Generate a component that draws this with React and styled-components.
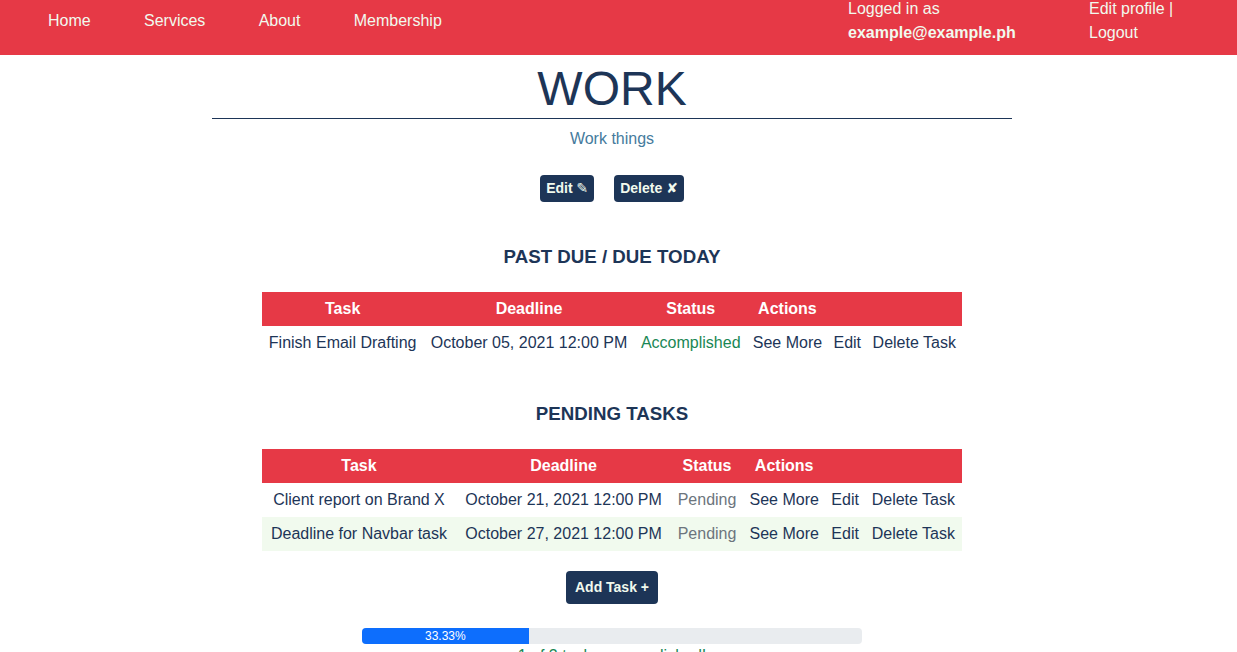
import React from 'react';
import styled, { createGlobalStyle } from 'styled-components';

const red = '#e63946';
const navy = '#1d3557';
const cream = '#f1faee';
const steel = '#457b9d';

const GlobalStyle = createGlobalStyle`
body {
  margin: 0;
  font-family: "Liberation Sans", Arial, "DejaVu Sans", sans-serif;
  font-size: 16px;
  line-height: 24px;
  color: ${navy};
  background: white;
}
`;

const Navbar = styled.nav`
display: flex;
height: 55px;
background-color: ${red};
color: ${cream};
`;

const NavLinks = styled.div`
display: flex;
gap: 53.3px;
padding: 9px 0 0 48px;
`;

const NavLink = styled.a`
color: ${cream};
text-decoration: none;
height: 24px;
`;

const NavBlock = styled.div`
display: flex;
flex-direction: column;
margin-top: -3px;
width: ${({ $width }) => $width}px;
margin-left: ${({ $auto }) => ($auto ? 'auto' : '0')};
`;

const Strong = styled.span`
font-weight: bold;
`;

const Main = styled.main`
width: 1224px;
display: flex;
flex-direction: column;
align-items: center;
`;

const Title = styled.h1`
margin: 5px 0 0;
font-size: 48px;
font-weight: normal;
line-height: 58px;
color: ${navy};
`;

const Rule = styled.hr`
width: 800px;
margin: 0;
border: none;
border-top: 1px solid ${navy};
`;

const Subtitle = styled.p`
margin: 8px 0 0;
color: ${steel};
`;

const ButtonRow = styled.div`
display: flex;
gap: 20px;
margin-top: 24px;
`;

const Button = styled.button`
font-family: "Liberation Sans", Arial, "DejaVu Sans", sans-serif;
font-weight: bold;
font-size: 14px;
line-height: 21px;
padding: ${({ $big }) => ($big ? '6px 9px' : '3px 6px')};
border: none;
border-radius: 4px;
background-color: ${navy};
color: ${cream};
cursor: pointer;
margin-top: ${({ $top }) => $top || 0}px;
`;

const Glyph = styled.span`
font-family: "DejaVu Sans", sans-serif;
font-size: 14px;
font-weight: bold;
`;

const Heading = styled.h3`
margin: ${({ $top }) => $top}px 0 24.5px;
font-size: 18.72px;
line-height: 22px;
font-weight: bold;
color: ${navy};
`;

const Table = styled.table`
width: 700px;
border-collapse: collapse;
text-align: center;
`;

const Th = styled.th`
background-color: ${red};
color: white;
font-weight: bold;
padding: 5px;
`;

const Row = styled.tr`
background-color: ${({ $highlight }) => ($highlight ? cream : 'transparent')};
`;

const Td = styled.td`
padding: 5px;
white-space: nowrap;
color: ${({ $tone }) =>
  $tone === 'done' ? '#198754' : $tone === 'pending' ? '#6c757d' : navy};
`;

const Progress = styled.div`
width: 500px;
height: 16px;
margin-top: 24px;
border-radius: 4px;
background-color: #e9ecef;
overflow: hidden;
display: flex;
`;

const ProgressFill = styled.div`
background-color: #0d6efd;
color: white;
font-size: 12px;
line-height: 16px;
text-align: center;
`;

const Summary = styled.p`
margin: 2px 0 0;
line-height: 1.2;
color: #198754;
`;

const pastDue = [
  { task: 'Finish Email Drafting', deadline: 'October 05, 2021 12:00 PM', status: 'Accomplished' },
];

const pending = [
  { task: 'Client report on Brand X', deadline: 'October 21, 2021 12:00 PM', status: 'Pending' },
  { task: 'Deadline for Navbar task', deadline: 'October 27, 2021 12:00 PM', status: 'Pending', highlight: true },
];

function TaskTable({ tasks }) {
  return (
    <Table>
      <thead>
        <tr>
          <Th>Task</Th>
          <Th>Deadline</Th>
          <Th>Status</Th>
          <Th>Actions</Th>
          <Th></Th>
          <Th></Th>
        </tr>
      </thead>
      <tbody>
        {tasks.map((t) => (
          <Row key={t.task} $highlight={t.highlight}>
            <Td>{t.task}</Td>
            <Td>{t.deadline}</Td>
            <Td $tone={t.status === 'Accomplished' ? 'done' : 'pending'}>{t.status}</Td>
            <Td>See More</Td>
            <Td>Edit</Td>
            <Td>Delete Task</Td>
          </Row>
        ))}
      </tbody>
    </Table>
  );
}

export default function App() {
  const done = 1;
  const total = 3;
  const pct = ((done / total) * 100).toFixed(2);

  return (
    <>
      <GlobalStyle />
      <Navbar>
        <NavLinks>
          <NavLink href="#">Home</NavLink>
          <NavLink href="#">Services</NavLink>
          <NavLink href="#">About</NavLink>
          <NavLink href="#">Membership</NavLink>
        </NavLinks>
        <NavBlock $auto $width={241}>
          <span>Logged in as</span>
          <Strong>example@example.ph</Strong>
        </NavBlock>
        <NavBlock $width={148}>
          <span>Edit profile |</span>
          <span>Logout</span>
        </NavBlock>
      </Navbar>

      <Main>
        <Title>WORK</Title>
        <Rule />
        <Subtitle>Work things</Subtitle>
        <ButtonRow>
          <Button>Edit <Glyph>✎</Glyph></Button>
          <Button>Delete <Glyph>✘</Glyph></Button>
        </ButtonRow>

        <Heading $top={43.5}>PAST DUE / DUE TODAY</Heading>
        <TaskTable tasks={pastDue} />

        <Heading $top={42.5}>PENDING TASKS</Heading>
        <TaskTable tasks={pending} />

        <Button $big $top={20}>Add Task +</Button>

        <Progress>
          <ProgressFill style={{ width: `${pct}%` }}>{pct}%</ProgressFill>
        </Progress>
        <Summary>{done} of {total} tasks accomplished!</Summary>
      </Main>
    </>
  );
}
